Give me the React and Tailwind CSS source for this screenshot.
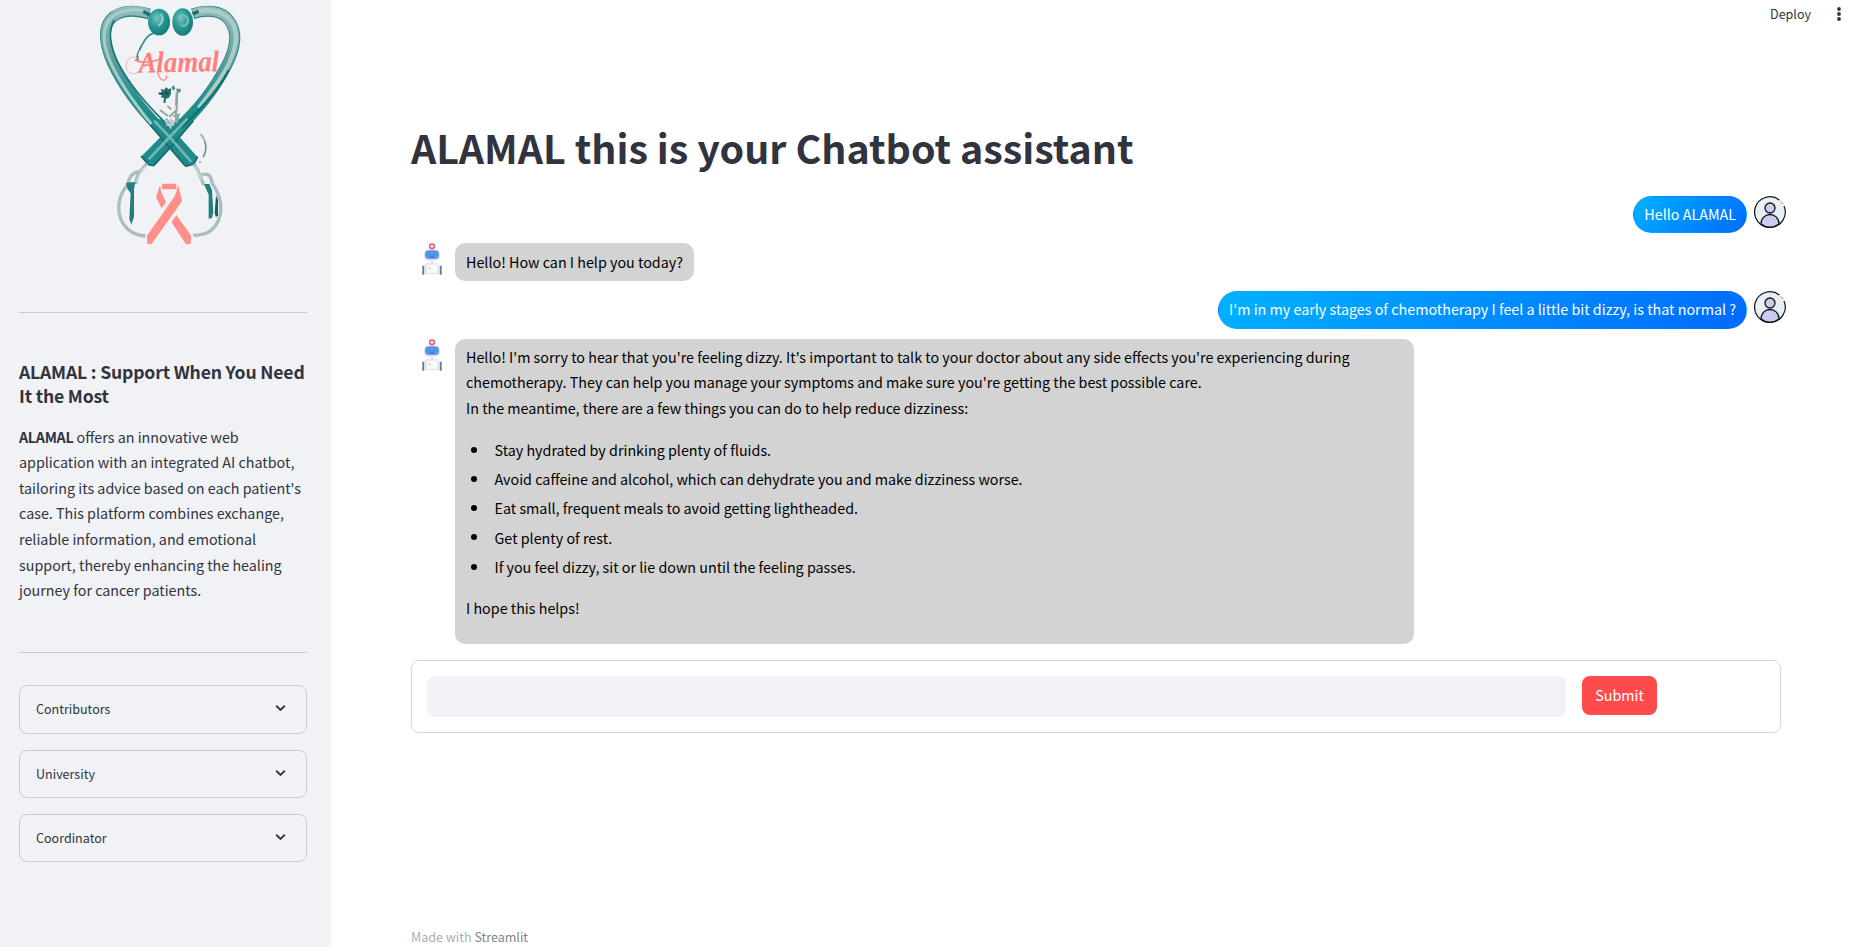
function Logo() {
  return (
    <svg className="ml-[61px] block h-[260px] w-[180px] shrink-0" viewBox="0 0 540 780" fill="none">
      <defs>
        <linearGradient id="tube" x1="0" y1="0" x2="0" y2="1">
          <stop offset="0" stopColor="#8fbcb9" />
          <stop offset="0.35" stopColor="#5fa19f" />
          <stop offset="0.7" stopColor="#1f908d" />
          <stop offset="1" stopColor="#1c8583" />
        </linearGradient>
        <radialGradient id="bell" cx="0.4" cy="0.35" r="0.7">
          <stop offset="0" stopColor="#7cc4c1" />
          <stop offset="0.45" stopColor="#2a9c99" />
          <stop offset="1" stopColor="#157573" />
        </radialGradient>
      </defs>
      <path d="M208 42C165 30 118 26 90 60C66 92 76 140 98 190C128 255 180 325 240 385L270 420" stroke="#2b8382" strokeWidth="33" />
      <path d="M338 41C375 30 424 28 448 62C476 100 464 150 440 196C412 250 360 325 290 388L270 420" stroke="#2b8382" strokeWidth="33" />
      <path d="M206 41C165 28 118 26 90 60C66 92 76 140 98 190C128 255 180 325 240 385L270 420" stroke="url(#tube)" strokeWidth="28" />
      <path d="M340 40C375 28 424 28 448 62C476 100 464 150 440 196C412 250 360 325 290 388L270 420" stroke="url(#tube)" strokeWidth="28" />
      <path d="M294 358L344 356L284 428L222 497L202 492L183 470Z" fill="#20898a" />
      <path d="M196 356L246 358L296 408L353 472L344 490L315 498Z" fill="#20898a" />
      <path d="M340 362L284 428L222 496M200 362L315 497" stroke="#14696a" strokeWidth="5" />
      <path d="M190 32C150 24 108 34 86 62C62 98 72 144 94 192C122 254 170 318 214 372" stroke="#a9cbc9" strokeWidth="9" />
      <path d="M352 34C395 24 440 36 460 74C476 112 466 150 444 196C422 240 390 280 356 324" stroke="#a9cbc9" strokeWidth="13" />
      <path d="M103 60C80 96 92 140 112 184C142 244 190 304 256 368" stroke="#147674" strokeWidth="5" />
      <path d="M446 210C420 262 370 320 308 380" stroke="#117270" strokeWidth="7" />
      <path d="M190 34L214 48M338 42L356 34" stroke="#16706f" strokeWidth="10" />
      <path d="M222 362L268 410L334 486M322 356L272 408L206 478" stroke="#6fb8b5" strokeWidth="8" />
      <path d="M183 468L206 494L222 497M315 499L342 492L353 470" stroke="#136967" strokeWidth="5" />
      <ellipse cx="237" cy="66" rx="33" ry="40" fill="url(#bell)" />
      <ellipse cx="308" cy="66" rx="31" ry="41" fill="url(#bell)" />
      <path d="M242 42Q256 58 236 78" stroke="#8fccc9" strokeWidth="7" />
      <path d="M304 44Q330 48 322 70Q312 84 302 74" stroke="#76bebb" strokeWidth="6" />
      <path d="M220 100C200 104 188 130 178 152" stroke="#3f8f8d" strokeWidth="5" />
      <path d="M183 134L171 160L168 178L178 182L174 164Z" fill="#2b7f7e" />
      <path d="M178 178C150 158 128 190 142 212C160 234 190 214 206 182" stroke="#efb4b2" strokeWidth="3" />
      <path d="M164 180C186 192 216 186 240 178" stroke="#ff7f7c" strokeWidth="5" />
      <path d="M232 214C240 246 260 248 260 226" stroke="#ff8a86" strokeWidth="4" />
      <text x="176" y="218" fontFamily="Liberation Serif, serif" fontStyle="italic" fontWeight="700" fontSize="90" textLength="242" lengthAdjust="spacingAndGlyphs" transform="rotate(-1 176 218)" fill="#ff7f7c">Alamal</text>
      <path d="M242 266L252 270L258 262L266 268L274 264L272 284L266 294L258 296L256 310L250 308L252 294L242 292L246 286L236 282L246 278Z" fill="#236f70" />
      <path d="M236 280H248M256 276L264 282" stroke="#123f4c" strokeWidth="5" />
      <path d="M274 262L282 256L286 266L280 272ZM288 266L302 266V276L292 278Z" fill="#5a8d8b" />
      <path d="M290 278L288 318M292 276L290 330L268 350M288 332V366M262 318L274 328M240 330L264 348M258 356L272 374M280 350L296 344L290 370" stroke="#8fa6a8" strokeWidth="6" />
      <path d="M262 360V378M272 356V386M280 360V378" stroke="#b8bfc5" strokeWidth="6" />
      <path d="M362 402C380 424 382 450 369 472" stroke="#9fb9b9" strokeWidth="6" />
      <path d="M374 424Q382 450 370 470" stroke="#4b8a8a" strokeWidth="3" />
      <path d="M358 484L362 488" stroke="#8ca8a8" strokeWidth="5" />
      <path d="M200 490C186 512 168 518 168 552M176 514C152 520 146 536 144 552C112 590 108 636 130 672C146 696 168 706 196 708" stroke="#a8bfbf" strokeWidth="10" />
      <path d="M342 492C360 516 360 532 372 556M366 524C388 518 394 530 396 550C426 590 430 636 410 672C392 700 370 704 340 706" stroke="#a8bfbf" strokeWidth="10" />
      <path d="M196 500C178 516 176 532 170 550M346 500L366 540" stroke="#d0dbdb" strokeWidth="4" />
      <path d="M138 548L166 546L162 568L162 650L154 674L148 656L152 580L142 566Z" fill="#237f7f" />
      <path d="M372 552L388 552L396 570L400 636L396 654L386 656V584Z" fill="#237f7f" />
      <path d="M408 586L414 600L414 646L408 652L404 640Z" fill="#1c5f61" />
      <path d="M248 551H288L290 566L284 568H250L244 564Z" fill="#ff8f88" />
      <path d="M240 556L243 574L258 607L245 625L228 592Z" fill="#ff8f88" />
      <path d="M295 556L306 602L302 610L214 733H206L201 728V707L285 587Z" fill="#ff8f88" />
      <path d="M289 646L333 706V728L328 733H318L274 666Z" fill="#ff8f88" />
    </svg>
  );
}

function Robot() {
  return (
    <svg className="mx-[5px] block size-8 shrink-0" viewBox="0 0 96 96" fill="none">
      <path d="M48 16V24M48 50V62" stroke="#c3c9d3" strokeWidth="4" />
      <circle cx="48" cy="10" r="7" fill="#fff" stroke="#f4586b" strokeWidth="5" />
      <rect x="23" y="20" width="50" height="35" rx="15" fill="#e6e9ee" />
      <rect x="27" y="22" width="42" height="26" rx="12" fill="#5796ea" />
      <path d="M42 39Q48 45 54 39M38 34H40M56 34H58" stroke="#3c75c8" strokeWidth="3" />
      <rect x="28" y="61" width="40" height="32" rx="4" fill="#e1e4ea" />
      <rect x="32" y="65" width="32" height="24" rx="2" fill="#fbfcfd" />
      <circle cx="41" cy="76" r="2" fill="#7c8795" />
      <path d="M22 68V95M74 68V95" stroke="#6d7886" strokeWidth="6" />
      <path d="M27 66V90M69 66V90" stroke="#dfe3e9" strokeWidth="4" />
    </svg>
  );
}

function Person() {
  return (
    <svg className="ml-[7px] block size-8 shrink-0" viewBox="0 0 96 96" fill="none">
      <circle cx="48" cy="48" r="46" fill="#e9f0f2" />
      <path d="M21 84C22 46 74 46 75 84Q48 104 21 84Z" fill="#ccccf3" stroke="#16161a" strokeWidth="4" />
      <circle cx="48" cy="36" r="15" fill="#ccccf3" stroke="#16161a" strokeWidth="4" />
      <path d="M76 12A46 46 0 1 0 90 30" stroke="#16161a" strokeWidth="3.6" />
      <path d="M81 17L83 19M86 22L87 24" stroke="#16161a" strokeWidth="3" />
    </svg>
  );
}

function Expander({ title, className }) {
  return (
    <div className={"flex items-center justify-between rounded-lg border border-[#cacbd0] pl-4 pr-5 " + className}>
      <span className="text-[12.54px] leading-[22px]">{title}</span>
      <svg className="-mt-[2px] block h-[6px] w-[11px]" viewBox="0 0 11 6" fill="none">
        <path d="M1.2 0.8L5.5 4.9L9.8 0.8" stroke="#31333f" strokeWidth="1.9" />
      </svg>
    </div>
  );
}

function UserMessage({ children, className }) {
  return (
    <div className={"flex items-start justify-end pr-[69px] " + className}>
      <div className="h-full rounded-[20px] border border-transparent bg-[linear-gradient(135deg,#00b2ff_0%,#006aff_100%)] px-[10px] pt-[4px] text-white">
        <span className="block whitespace-nowrap leading-[26px]">{children}</span>
      </div>
      <Person />
    </div>
  );
}

const tips = [
  "Stay hydrated by drinking plenty of fluids.",
  "Avoid caffeine and alcohol, which can dehydrate you and make dizziness worse.",
  "Eat small, frequent meals to avoid getting lightheaded.",
  "Get plenty of rest.",
  "If you feel dizzy, sit or lie down until the feeling passes.",
];

export default function App() {
  return (
    <div className="flex h-[947px] w-full overflow-hidden bg-white font-['Noto_Sans_CJK_SC',sans-serif] text-[14.32px] text-[#31333f]">
      <aside className="flex w-[331px] shrink-0 flex-col bg-[#f0f2f6] pl-[19px] pr-6">
        <Logo />
        <hr className="mt-[52px] border-[#cacbd0]" />
        <h2 className="mt-[47px] whitespace-nowrap text-[17.6px] font-bold leading-6 tracking-[-0.18px]">
          ALAMAL : Support When You Need<br />It the Most
        </h2>
        <p className="mt-[15.6px] whitespace-nowrap leading-[25.6px]">
          <strong className="font-bold tracking-[-0.3px]">ALAMAL</strong> offers an innovative web<br />
          application with an integrated AI chatbot,<br />
          tailoring its advice based on each patient's<br />
          case. This platform combines exchange,<br />
          reliable information, and emotional<br />
          support, thereby enhancing the healing<br />
          journey for cancer patients.
        </p>
        <hr className="mt-[49.2px] border-[#cacbd0]" />
        <Expander title="Contributors" className="mt-8 h-[49px]" />
        <Expander title="University" className="mt-4 h-12" />
        <Expander title="Coordinator" className="mt-4 h-12" />
      </aside>

      <main className="flex min-w-0 flex-1 flex-col pl-20">
        <header className="flex h-7 shrink-0 items-center justify-end gap-[26px] pr-[14px]">
          <span className="text-[12.54px] leading-5">Deploy</span>
          <svg className="block h-4 w-1" viewBox="0 0 4 16" fill="#31333f">
            <circle cx="2" cy="3" r="1.9" />
            <circle cx="2" cy="8" r="1.9" />
            <circle cx="2" cy="13" r="1.9" />
          </svg>
        </header>
        <h1 className="mt-[92px] text-[39.4px] font-bold leading-[53px]">ALAMAL this is your Chatbot assistant</h1>

        <section className="mt-[23px] flex flex-col">
          <UserMessage className="h-[37px]">Hello ALAMAL</UserMessage>
          <div className="mt-[10px] flex h-[38px] items-start">
            <Robot />
            <div className="ml-[2px] h-full rounded-[10px] bg-[#d3d3d3] px-[11px] pt-[6px] text-black">
              <span className="block whitespace-nowrap leading-[26px]">Hello! How can I help you today?</span>
            </div>
          </div>
          <UserMessage className="mt-[10px] h-[38px]">I'm in my early stages of chemotherapy I feel a little bit dizzy, is that normal ?</UserMessage>
          <div className="mt-[10px] flex h-[305px] items-start">
            <Robot />
            <div className="ml-[2px] h-full w-[959px] rounded-[10px] bg-[#d3d3d3] px-[11px] pt-[4.6px] leading-[25.6px] text-black">
              <p>
                Hello! I'm sorry to hear that you're feeling dizzy. It's important to talk to your doctor about any side effects you're experiencing during<br />
                chemotherapy. They can help you manage your symptoms and make sure you're getting the best possible care.<br />
                In the meantime, there are a few things you can do to help reduce dizziness:
              </p>
              <ul className="mt-[16.6px] flex flex-col gap-[3.6px]">
                {tips.map((t) => (
                  <li key={t} className="flex items-center">
                    <span className="ml-[5px] mr-[17.5px] size-[6px] rounded-full bg-black" />
                    <span>{t}</span>
                  </li>
                ))}
              </ul>
              <p className="mt-[15.6px]">I hope this helps!</p>
            </div>
          </div>
        </section>

        <form className="mt-4 flex h-[73px] w-[1370px] items-start gap-4 rounded-lg border border-[#d6d6d9] p-[15px]">
          <input className="h-[41px] w-[1139px] rounded-lg bg-[#f0f2f6] outline-none" />
          <button type="button" className="h-[39px] w-[75px] rounded-lg bg-[#ff4b4b] pb-[2px] text-white">Submit</button>
        </form>

        <footer className="mt-auto pb-px text-[12.54px] leading-[18px] text-[#adadb2]">
          Made with <span className="text-[#83848c]">Streamlit</span>
        </footer>
      </main>
    </div>
  );
}
